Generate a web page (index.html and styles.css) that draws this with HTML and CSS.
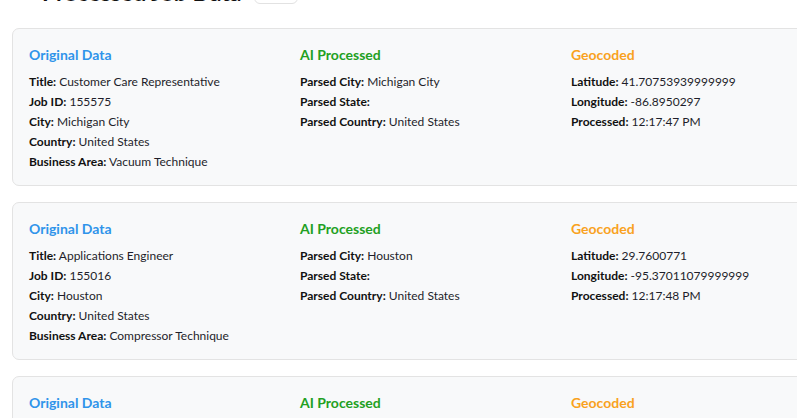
FILE: index.html
```html
<!DOCTYPE html>
<html lang="en">
<head>
<meta charset="utf-8">
<title>Processed Job Data</title>
<link rel="stylesheet" href="styles.css">
</head>
<body>
<div class="page">
  <div class="header">
    <span class="header-icon"></span>
    <h2 class="header-title">Processed Job Data</h2>
    <span class="header-badge">3</span>
  </div>

  <div class="card">
    <div class="col">
      <h4 class="col-title blue">Original Data</h4>
      <p class="row"><b>Title:</b> Customer Care Representative</p>
      <p class="row"><b>Job ID:</b> 155575</p>
      <p class="row"><b>City:</b> Michigan City</p>
      <p class="row"><b>Country:</b> United States</p>
      <p class="row"><b>Business Area:</b> Vacuum Technique</p>
    </div>
    <div class="col">
      <h4 class="col-title green">AI Processed</h4>
      <p class="row"><b>Parsed City:</b> Michigan City</p>
      <p class="row"><b>Parsed State:</b> </p>
      <p class="row"><b>Parsed Country:</b> United States</p>
    </div>
    <div class="col">
      <h4 class="col-title orange">Geocoded</h4>
      <p class="row"><b>Latitude:</b> 41.70753939999999</p>
      <p class="row"><b>Longitude:</b> -86.8950297</p>
      <p class="row"><b>Processed:</b> 12:17:47 PM</p>
    </div>
  </div>

  <div class="card">
    <div class="col">
      <h4 class="col-title blue">Original Data</h4>
      <p class="row"><b>Title:</b> Applications Engineer</p>
      <p class="row"><b>Job ID:</b> 155016</p>
      <p class="row"><b>City:</b> Houston</p>
      <p class="row"><b>Country:</b> United States</p>
      <p class="row"><b>Business Area:</b> Compressor Technique</p>
    </div>
    <div class="col">
      <h4 class="col-title green">AI Processed</h4>
      <p class="row"><b>Parsed City:</b> Houston</p>
      <p class="row"><b>Parsed State:</b> </p>
      <p class="row"><b>Parsed Country:</b> United States</p>
    </div>
    <div class="col">
      <h4 class="col-title orange">Geocoded</h4>
      <p class="row"><b>Latitude:</b> 29.7600771</p>
      <p class="row"><b>Longitude:</b> -95.37011079999999</p>
      <p class="row"><b>Processed:</b> 12:17:48 PM</p>
    </div>
  </div>

  <div class="card">
    <div class="col">
      <h4 class="col-title blue">Original Data</h4>
      <p class="row"><b>Title:</b> Service Technician</p>
      <p class="row"><b>Job ID:</b> 155012</p>
    </div>
    <div class="col">
      <h4 class="col-title green">AI Processed</h4>
    </div>
    <div class="col">
      <h4 class="col-title orange">Geocoded</h4>
    </div>
  </div>
</div>
</body>
</html>
```

FILE: styles.css
```css
html, body {
  margin: 0;
  padding: 0;
  background: #ffffff;
  overflow: hidden;
}
body {
  font-family: Lato, "Open Sans", Arial, sans-serif;
  color: #1a1a1a;
}
.page {
  padding: 0 0 0 12px;
  width: 900px;
}
.header {
  display: flex;
  align-items: center;
  height: 28px;
  margin-top: -22px;
  margin-bottom: 22px;
}
.header-icon {
  width: 11px;
  height: 11px;
  margin-left: 3px;
  margin-right: 16px;
  background: #2196f3;
  border-radius: 2px;
}
.header-title {
  margin: 0 13px 0 0;
  font-size: 23px;
  line-height: 28px;
  font-weight: 700;
  color: #111;
}
.header-badge {
  width: 42px;
  height: 22px;
  border: 1px solid #e2e2e2;
  border-radius: 6px;
  color: transparent;
  font-size: 11px;
}
.card {
  display: grid;
  grid-template-columns: repeat(3, 255px);
  column-gap: 16px;
  padding: 16px 16px 15px;
  background: #f8f9fa;
  border: 1px solid #e3e3e3;
  border-radius: 7px;
  margin-bottom: 16px;
  width: max-content;
}
.col {
  display: flex;
  flex-direction: column;
  gap: 4px;
}
.col-title {
  margin: 0 0 5px;
  font-size: 14px;
  line-height: 20px;
  font-weight: 700;
}
.blue { color: #2f94ea; }
.green { color: #22a022; }
.orange { color: #f9a21e; }
.row {
  margin: 0;
  font-size: 12px;
  line-height: 16px;
  color: #1e1e2a;
}
.row b {
  font-weight: 700;
  color: #111;
}
```
